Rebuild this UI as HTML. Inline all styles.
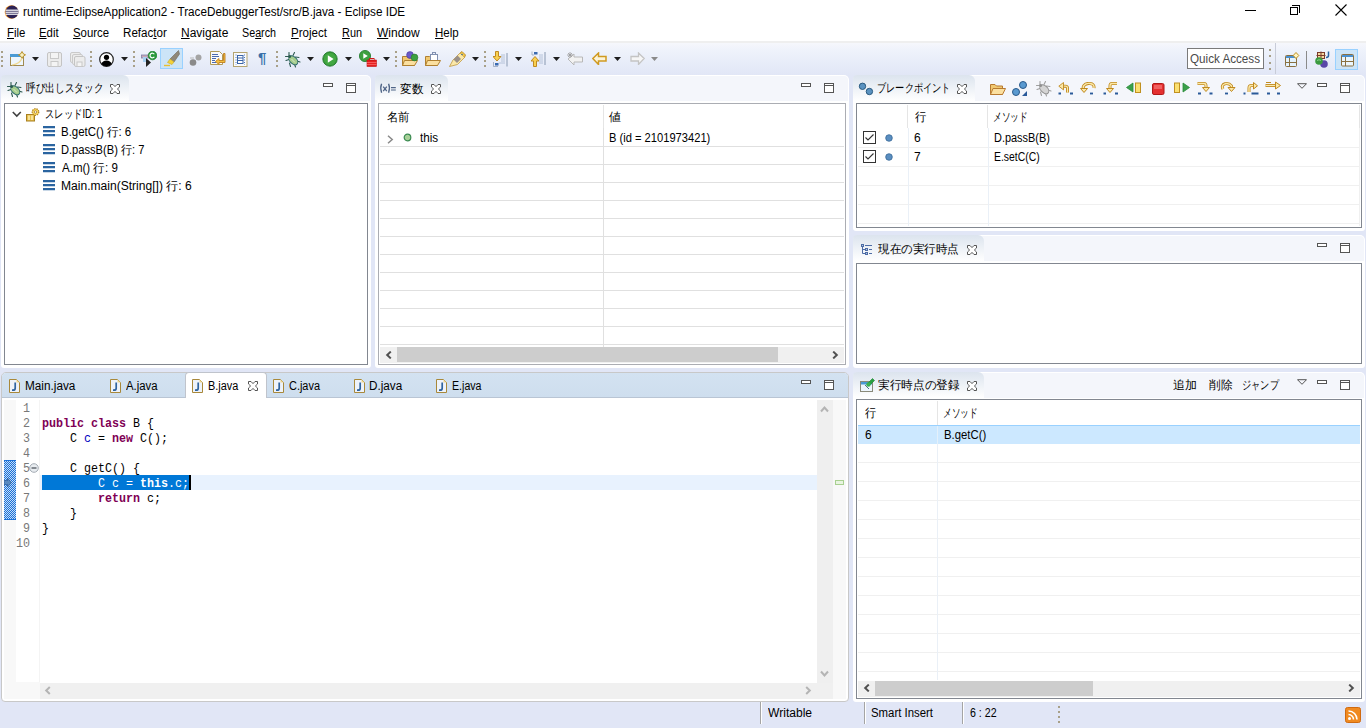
<!DOCTYPE html>
<html><head><meta charset="utf-8">
<style>
*{margin:0;padding:0;box-sizing:border-box}
html,body{width:1366px;height:728px;overflow:hidden;background:#e1e6f6;font-family:"Liberation Sans",sans-serif;font-size:12px;color:#000}
.a{position:absolute}
.t{position:absolute;white-space:nowrap;line-height:14px;font-size:12px}
.m{position:absolute;white-space:pre;font-family:"Liberation Mono",monospace;font-size:12px;line-height:15px;transform:scaleX(0.9722);transform-origin:0 0}
.panel{position:absolute;background:#fff;border-radius:5px 5px 3px 3px}
.hdr{position:absolute;left:1px;right:1px;top:1px;height:25px;background:#f4f6fb;border-radius:4px 4px 0 0}
.tab{position:absolute;left:0;top:0;height:26px;background:linear-gradient(#dce4ee,#fff);border-radius:4px 6px 0 0}
.cb{position:absolute;border:1px solid #828790;background:#fff}
.grid{position:absolute;height:1px;background:#f0f0f0}
.vline{position:absolute;width:1px;background:#f0f0f0}
.minb{position:absolute;width:10px;height:4px;border:1px solid #5a5a5a;background:#fff}
.maxb{position:absolute;width:11px;height:11px;border:1px solid #5a5a5a;border-top-width:2px;background:#fff}
.u{text-decoration:underline}
</style></head><body>

<!-- title bar -->
<div class="a" style="left:0;top:0;width:1366px;height:41px;background:#fff"></div>
<svg class="a" style="left:3px;top:4px" width="16" height="16" viewBox="0 0 16 16">
<circle cx="8.5" cy="8" r="6.8" fill="#f7941e"/>
<circle cx="9" cy="8" r="6.5" fill="#2c2255"/>
<rect x="2.5" y="5.6" width="13" height="1.2" fill="#fff"/>
<rect x="2.5" y="7.6" width="13" height="1.2" fill="#fff"/>
<rect x="2.5" y="9.6" width="13" height="1.2" fill="#fff"/>
</svg>
<!-- window controls -->
<div class="a" style="left:1245px;top:10px;width:11px;height:1px;background:#000"></div>
<div class="a" style="left:1290px;top:7px;width:8px;height:8px;border:1px solid #000"></div>
<div class="a" style="left:1292px;top:5px;width:8px;height:8px;border-top:1px solid #000;border-right:1px solid #000"></div>
<svg class="a" style="left:1335px;top:4px" width="12" height="12"><path d="M0.5 0.5L11.5 11.5M11.5 0.5L0.5 11.5" stroke="#000" stroke-width="1.1"/></svg>

<!-- menu -->

<!-- toolbar -->
<div class="a" style="left:0;top:41px;width:1366px;height:2px;background:#efefef"></div>
<div class="a" style="left:0;top:43px;width:1366px;height:32px;background:linear-gradient(#f6f7fc,#eef2fb 25%,#e1e6f6)"></div>

<svg width="0" height="0" style="position:absolute">
<defs>
<symbol id="dd" viewBox="0 0 7 4"><path d="M0 0H7L3.5 4Z" fill="#1e1e1e"/></symbol>
<symbol id="ddg" viewBox="0 0 7 4"><path d="M0 0H7L3.5 4Z" fill="#8a8a8a"/></symbol>
<symbol id="grip" viewBox="0 0 2 16"><rect x="0" y="0" width="2" height="2" fill="#a8a088"/><rect x="0" y="5" width="2" height="2" fill="#a8a088"/><rect x="0" y="9" width="2" height="2" fill="#a8a088"/><rect x="0" y="14" width="2" height="2" fill="#a8a088"/></symbol>
<symbol id="bug" viewBox="0 0 16 16"><g stroke="#2d5a50" stroke-width="1.1" fill="none" stroke-linecap="round"><path d="M4 0.5V3.5M9.5 0.5L8 3.5M0.5 4.5H3.5M10.5 5L14 5.5M1 8.5L4 7.5M12 9L15 10M4.5 11L5.5 14.5M9.5 12L10.5 15"/></g><ellipse cx="8.3" cy="8.3" rx="5.3" ry="3.4" transform="rotate(45 8.3 8.3)" fill="#a4cc8c" stroke="#2a6a6a" stroke-width="1"/><path d="M6.5 7L10 10.5" stroke="#d8eccc" stroke-width="0.9"/><circle cx="4.6" cy="4.6" r="1.5" fill="#2a5a50"/></symbol>
<symbol id="runc" viewBox="0 0 16 16"><circle cx="8" cy="8" r="7.2" fill="#3a9a3a" stroke="#1f7a2a" stroke-width="0.9"/><circle cx="8" cy="8" r="6" fill="#42a842"/><path d="M5.8 4.2L11.6 8L5.8 11.8Z" fill="#fff"/></symbol>
<symbol id="jfile" viewBox="0 0 11 14"><path d="M0.5 0.5H7.5L10.5 3.5V13.5H0.5Z" fill="#eef3fa" stroke="#a8883a" stroke-width="1"/><path d="M7.5 0.5V3.5H10.5Z" fill="#f0d890"/><path d="M6.2 3.5V9.2Q6.2 11.2 4 11.2H3" fill="none" stroke="#2f64a0" stroke-width="1.7"/></symbol>
<symbol id="xcl" viewBox="0 0 10 10"><path d="M0.5 0.5H3L5 2.6L7 0.5H9.5V3L7.4 5L9.5 7V9.5H7L5 7.4L3 9.5H0.5V7L2.6 5L0.5 3Z" fill="#fff" stroke="#555" stroke-width="1"/></symbol>
<symbol id="minb" viewBox="0 0 10 4"><rect x="0.5" y="0.5" width="9" height="3" fill="#fff" stroke="#555" stroke-width="1"/></symbol>
<symbol id="maxb" viewBox="0 0 10 10"><rect x="0.5" y="0.5" width="9" height="9" fill="#fff" stroke="#555" stroke-width="1"/><path d="M0.5 2.5H9.5" stroke="#555" stroke-width="1"/></symbol>
<symbol id="vmenu" viewBox="0 0 10 6"><path d="M0.5 0.7H9.5L5 5.3Z" fill="none" stroke="#555" stroke-width="1"/></symbol>
</defs></svg>
<svg class="a" style="left:1px;top:51px" width="2" height="16"><use href="#grip" width="2" height="16"/></svg>
<svg class="a" style="left:90px;top:51px" width="2" height="16"><use href="#grip" width="2" height="16"/></svg>
<svg class="a" style="left:133px;top:51px" width="2" height="16"><use href="#grip" width="2" height="16"/></svg>
<svg class="a" style="left:276px;top:51px" width="2" height="16"><use href="#grip" width="2" height="16"/></svg>
<svg class="a" style="left:395px;top:51px" width="2" height="16"><use href="#grip" width="2" height="16"/></svg>
<svg class="a" style="left:484px;top:51px" width="2" height="16"><use href="#grip" width="2" height="16"/></svg>
<svg class="a" style="left:1269px;top:49px" width="2" height="21"><rect x="0" y="0" width="2" height="2" fill="#a8a088"/><rect x="0" y="6" width="2" height="2" fill="#a8a088"/><rect x="0" y="13" width="2" height="2" fill="#a8a088"/><rect x="0" y="19" width="2" height="2" fill="#a8a088"/></svg>
<svg class="a" style="left:32px;top:57px" width="7" height="4"><use href="#dd" width="7" height="4"/></svg>
<svg class="a" style="left:121px;top:57px" width="7" height="4"><use href="#dd" width="7" height="4"/></svg>
<svg class="a" style="left:307px;top:57px" width="7" height="4"><use href="#dd" width="7" height="4"/></svg>
<svg class="a" style="left:345px;top:57px" width="7" height="4"><use href="#dd" width="7" height="4"/></svg>
<svg class="a" style="left:383px;top:57px" width="7" height="4"><use href="#dd" width="7" height="4"/></svg>
<svg class="a" style="left:472px;top:57px" width="7" height="4"><use href="#dd" width="7" height="4"/></svg>
<svg class="a" style="left:515px;top:57px" width="7" height="4"><use href="#dd" width="7" height="4"/></svg>
<svg class="a" style="left:553px;top:57px" width="7" height="4"><use href="#dd" width="7" height="4"/></svg>
<svg class="a" style="left:614px;top:57px" width="7" height="4"><use href="#dd" width="7" height="4"/></svg>
<svg class="a" style="left:651px;top:57px" width="7" height="4"><use href="#ddg" width="7" height="4"/></svg>
<!-- new -->
<svg class="a" style="left:9px;top:51px" width="17" height="16"><rect x="1.5" y="3.5" width="13" height="11" fill="#eef6fd" stroke="#a08a50"/><rect x="1" y="3" width="11" height="3" fill="#4a9ad4"/><path d="M13 0.5L14.5 3L16.5 3.8L14.5 5L13 7.5L11.5 5L9.5 3.8L11.5 3Z" fill="#f8f0c0" stroke="#b8902a" stroke-width="1"/><path d="M3 14Q11 13 13 7" stroke="#f0d890" fill="none" stroke-width="1.2"/></svg>
<!-- save (disabled) -->
<svg class="a" style="left:47px;top:52px" width="15" height="15"><rect x="0.5" y="0.5" width="14" height="14" rx="1.5" fill="#ececec" stroke="#c4c4c4"/><rect x="3.5" y="0.5" width="8" height="6" fill="#f4f4f4" stroke="#c8c8c8"/><rect x="4" y="9.5" width="7" height="5" fill="#f4f4f4" stroke="#c8c8c8"/></svg>
<!-- save all (disabled) -->
<svg class="a" style="left:70px;top:52px" width="16" height="15"><rect x="0.5" y="0.5" width="10" height="10" rx="1.5" fill="#ececec" stroke="#cacaca"/><rect x="2.5" y="2.5" width="10" height="10" rx="1.5" fill="#ececec" stroke="#cacaca"/><rect x="4.5" y="4.5" width="10.5" height="10" rx="1.5" fill="#ececec" stroke="#c4c4c4"/><rect x="7" y="10" width="5" height="4.5" fill="#f4f4f4" stroke="#c8c8c8"/></svg>
<!-- person -->
<svg class="a" style="left:99px;top:52px" width="15" height="15"><circle cx="7.5" cy="7.5" r="6.8" fill="#fff" stroke="#222" stroke-width="1.2"/><circle cx="7.5" cy="5.3" r="2.6" fill="#000"/><path d="M2.3 12Q3.5 8.5 7.5 8.5Q11.5 8.5 12.7 12Q10.5 14.3 7.5 14.3Q4.5 14.3 2.3 12Z" fill="#000"/></svg>
<!-- next/coverage -->
<svg class="a" style="left:141px;top:51px" width="16" height="16"><rect x="0.5" y="4" width="8" height="3" fill="#c8a8b8" stroke="#8080a8" stroke-width="0.8"/><rect x="2" y="6" width="4" height="5" fill="#a8d0f0"/><path d="M5 7L10 11.5L5 16Z" fill="#222"/><circle cx="11.5" cy="4.5" r="4.3" fill="#2a9a3a" stroke="#1a7a2a" stroke-width="0.7"/><path d="M13.3 3.3A2.3 2.3 0 1 0 13.3 5.7" stroke="#fff" stroke-width="1.2" fill="none"/></svg>
<!-- highlight toggle -->
<div class="a" style="left:160px;top:48px;width:23px;height:21px;background:#cce4f7;border:1px solid #99d1ff"></div>
<svg class="a" style="left:164px;top:50px" width="16" height="17"><path d="M14.5 0.5L15.5 4L10 12L6 9Z" fill="#8f8878" stroke="#6f6a5a" stroke-width="0.6"/><path d="M6 9L10 12L8 14.5L3.5 12.5Z" fill="#f4d23a" stroke="#c8a82a" stroke-width="0.6"/><path d="M0 15.5H6" stroke="#e8c030" stroke-width="1.4"/></svg>
<!-- gray balls -->
<svg class="a" style="left:189px;top:53px" width="13" height="13"><circle cx="4" cy="9.5" r="3.3" fill="#8a8a8a"/><circle cx="9.5" cy="4.5" r="3" fill="#a4a4a4"/><path d="M1 5H5" stroke="#b8b8b8"/></svg>
<!-- doc arrow -->
<svg class="a" style="left:210px;top:51px" width="16" height="15"><path d="M0.5 0.5H9.5L12.5 3.5V13.5H0.5Z" fill="#fafafa" stroke="#b09a5a"/><path d="M2 3.5H8M2 5.5H9M2 7.5H6M2 9.5H5M2 11.5H6" stroke="#4a6ab0" stroke-width="1"/><path d="M13.5 2.5V9.5H9V7.5L5.5 10.5L9 13.5V11.5H15V2.5Z" fill="#f4c040" stroke="#c08020" stroke-width="0.9"/></svg>
<!-- doc list -->
<svg class="a" style="left:233px;top:52px" width="15" height="15"><rect x="0.5" y="0.5" width="13.5" height="14" fill="#fbfbfb" stroke="#b4a470"/><path d="M3 2.5V13" stroke="#4a7ac0" stroke-dasharray="1 1.5"/><path d="M11.5 2.5V13" stroke="#4a7ac0" stroke-dasharray="1 1.5"/><rect x="4.5" y="3.5" width="5.5" height="8" fill="#fff" stroke="#3a64a8"/><path d="M4.5 6H10M4.5 8.5H10" stroke="#3a64a8"/></svg>
<!-- pilcrow -->
<div class="a" style="left:258px;top:49px;font-family:'Liberation Sans',sans-serif;font-weight:bold;font-size:15px;line-height:18px;color:#3a70aa">&para;</div>
<!-- debug -->
<svg class="a" style="left:285px;top:52px" width="16" height="16"><use href="#bug" width="16" height="16"/></svg>
<!-- run -->
<svg class="a" style="left:322px;top:51px" width="16" height="16"><use href="#runc" width="16" height="16"/></svg>
<!-- ext tools -->
<svg class="a" style="left:359px;top:50px" width="18" height="17"><circle cx="6" cy="6" r="5.6" fill="#3ea03e" stroke="#1f7a2a" stroke-width="0.8"/><path d="M4.3 3.2L8.8 6L4.3 8.8Z" fill="#fff"/><rect x="8" y="10" width="9.5" height="6.5" fill="#e62020" stroke="#c01010" stroke-width="0.6"/><rect x="10.5" y="8.5" width="4.5" height="2" fill="none" stroke="#d01818"/><path d="M8 12.5H17.5M8 14.5H17.5" stroke="#ff8080" stroke-width="0.6"/></svg>
<!-- open type -->
<svg class="a" style="left:402px;top:51px" width="17" height="16"><path d="M0.5 5.5H5L6.5 7H12.5V14.5H0.5Z" fill="#f0c870" stroke="#b08030"/><path d="M2.5 9.5H15.5L12.5 14.5H0.5Z" fill="#fbe0a0" stroke="#b08030"/><circle cx="8" cy="4" r="3.4" fill="#6a5ac8" stroke="#4a3a98" stroke-width="0.6"/><circle cx="12.5" cy="6.5" r="3.4" fill="#3aa040" stroke="#2a7030" stroke-width="0.6"/></svg>
<!-- open task -->
<svg class="a" style="left:425px;top:52px" width="16" height="14"><path d="M0.5 4.5H4.5L6 6H12.5V13.5H0.5Z" fill="#f0c870" stroke="#b08030"/><rect x="5.5" y="2.5" width="7" height="6" fill="#fff" stroke="#8090b0"/><rect x="7.5" y="0.5" width="3" height="2" fill="none" stroke="#8090b0"/><path d="M2.5 8.5H15.5L12.5 13.5H0.5Z" fill="#fbe0a0" stroke="#b08030"/></svg>
<!-- pen -->
<svg class="a" style="left:449px;top:51px" width="17" height="16"><path d="M0.5 15.5L4 9L11 2L15.5 6.5L8.5 13.5Z" fill="#fbe8a8" stroke="#c09840" stroke-width="0.8"/><path d="M4.5 8.5L8 12L12 8L8.5 4.5Z" fill="#9a9088"/><path d="M11 2L13 0.5L16.5 4L15.5 6.5" fill="#f4c848" stroke="#b08020" stroke-width="0.8"/><circle cx="13" cy="3.5" r="0.8" fill="#3a6aa0"/></svg>
<!-- next annotation -->
<svg class="a" style="left:493px;top:51px" width="15" height="16"><path d="M2.5 0.5H5.5V5.5H8L4 10L0 5.5H2.5Z" fill="#f8d050" stroke="#c08a20"/><path d="M8 4H12M8 6H12M8 8H12M8 10H12M6 12H12" stroke="#a8b8d0" stroke-width="0.8"/><rect x="2" y="12" width="3.5" height="2.5" fill="#3a6ab0"/><path d="M14 2V15.5" stroke="#8898b0"/><path d="M0.5 11V15.5H5" stroke="#8898b0" stroke-width="0.7" fill="none"/></svg>
<!-- prev annotation -->
<svg class="a" style="left:531px;top:51px" width="15" height="16"><path d="M4 5.5L8 10H5.5V15.5H2.5V10H0Z" fill="#f8d050" stroke="#c08a20" transform="translate(0 0)"/><path d="M8 4H12M8 6H12M8 8H12M8 10H12M8 12H12" stroke="#a8b8d0" stroke-width="0.8"/><rect x="3" y="1" width="3.5" height="2.5" fill="#3a6ab0"/><path d="M14 1V14" stroke="#8898b0"/><path d="M1 0.5V4H3" stroke="#8898b0" stroke-width="0.7" fill="none"/></svg>
<!-- last edit -->
<svg class="a" style="left:567px;top:52px" width="17" height="14"><path d="M1 7L7 2V5H15.5V10H7V13Z" fill="#f2f2f2" stroke="#b8b8b8"/><path d="M1 1L5 5M5 1L1 5M3 0V6M0 3H6" stroke="#9a9a9a" stroke-width="0.8"/></svg>
<!-- back -->
<svg class="a" style="left:592px;top:52px" width="15" height="13"><path d="M0.8 6.5L6.5 1V4.5H14V9H6.5V12.5Z" fill="#fcf4d8" stroke="#d09a20" stroke-width="1.5"/></svg>
<!-- forward disabled -->
<svg class="a" style="left:630px;top:52px" width="15" height="13"><path d="M14.2 6.5L8.5 1V4.5H1V9H8.5V12.5Z" fill="#f6f6f6" stroke="#c4c4c4" stroke-width="1.3"/></svg>
<!-- quick access -->
<div class="a" style="left:1187px;top:48px;width:77px;height:21px;background:#fff;border:1px solid #7a7a7a"></div>
<div class="a" style="left:1275px;top:43px;width:1px;height:31px;background:#c8ccd8"></div>
<svg class="a" style="left:1285px;top:52px" width="15" height="15"><rect x="0.5" y="3.5" width="11" height="11" rx="1" fill="#e4f2fc" stroke="#8a7040"/><rect x="1" y="4" width="10" height="2" fill="#4a90d0"/><path d="M4.5 6V14.5M1 10.5H11.5" stroke="#8a7040"/><path d="M11 0.5L13.8 3.5L11 6.5L8.2 3.5Z" fill="#fff4c0" stroke="#c09020"/></svg>
<div class="a" style="left:1306px;top:51px;width:1px;height:18px;background:#8a8a8a"></div>
<svg class="a" style="left:1315px;top:51px" width="16" height="18"><rect x="2.5" y="1.5" width="7" height="6" fill="#f4d8a0" stroke="#7a3a2a"/><path d="M6 0.5V8.5M1.5 4.5H10.5" stroke="#7a3a2a"/><path d="M13.5 0.5V4.5Q13.5 6.5 11 6.5" stroke="#2a64a0" stroke-width="1.5" fill="none"/><circle cx="9" cy="13" r="3.8" fill="#5a48a8"/><circle cx="4" cy="10" r="3.8" fill="#3a9a40"/><path d="M2 9.5Q4 8 6 9.5" stroke="#8ad08a" fill="none"/></svg>
<div class="a" style="left:1335px;top:49px;width:23px;height:21px;background:#cce4f7;border:1px solid #99d1ff"></div>
<svg class="a" style="left:1341px;top:54px" width="13" height="13"><rect x="0.5" y="0.5" width="12" height="11.5" rx="1" fill="#eaf6fd" stroke="#8a7040"/><rect x="1" y="1" width="11" height="2" fill="#4a90d0"/><path d="M4.5 3V12M1 7.5H12.5" stroke="#8a7040"/></svg>


<div class="t" style="left:23.0px;top:5px;transform:scaleX(0.9745);transform-origin:0 0;">runtime-EclipseApplication2 - TraceDebuggerTest/src/B.java - Eclipse IDE</div>
<div class="t" style="left:7.4px;top:26px;transform:scaleX(0.9526);transform-origin:0 0;"><span class="u">F</span>ile</div>
<div class="t" style="left:39.0px;top:26px;transform:scaleX(0.9476);transform-origin:0 0;"><span class="u">E</span>dit</div>
<div class="t" style="left:73.0px;top:26px;transform:scaleX(0.9474);transform-origin:0 0;"><span class="u">S</span>ource</div>
<div class="t" style="left:122.53px;top:26px;transform:scaleX(0.9667);transform-origin:0 0;">Refac<span class="u">t</span>or</div>
<div class="t" style="left:181.0px;top:26px;transform:scaleX(1.0000);transform-origin:0 0;"><span class="u">N</span>avigate</div>
<div class="t" style="left:242.0px;top:26px;transform:scaleX(0.8947);transform-origin:0 0;">Se<span class="u">a</span>rch</div>
<div class="t" style="left:291.0px;top:26px;transform:scaleX(0.9605);transform-origin:0 0;"><span class="u">P</span>roject</div>
<div class="t" style="left:342.0px;top:26px;transform:scaleX(0.9091);transform-origin:0 0;"><span class="u">R</span>un</div>
<div class="t" style="left:377.0px;top:26px;transform:scaleX(1.0000);transform-origin:0 0;"><span class="u">W</span>indow</div>
<div class="t" style="left:435.0px;top:26px;transform:scaleX(0.9600);transform-origin:0 0;"><span class="u">H</span>elp</div>
<div class="t" style="left:1190.2px;top:52px;transform:scaleX(0.9722);transform-origin:0 0;color:#4a4a4a">Quick Access</div>
<div class="panel" style="left:1px;top:75px;width:370px;height:293px"><div class="hdr"></div><div class="tab" style="width:128px"></div></div>
<svg class="a" style="left:7px;top:82px" width="16" height="16"><use href="#bug" width="16" height="16"/></svg>
<div class="t" style="left:26.1px;top:81px;transform:scaleX(0.8043);transform-origin:0 0;">呼び出しスタック</div>
<svg class="a" style="left:110px;top:84px" width="10" height="10"><use href="#xcl" width="10" height="10"/></svg>
<svg class="a" style="left:323px;top:83px" width="10" height="4"><use href="#minb" width="10" height="4"/></svg>
<svg class="a" style="left:346px;top:83px" width="10" height="10"><use href="#maxb" width="10" height="10"/></svg>
<div class="cb" style="left:4px;top:103px;width:364px;height:262px"></div>
<svg class="a" style="left:12px;top:111px" width="10" height="7"><path d="M0.8 1L4.8 5L8.8 1" fill="none" stroke="#404040" stroke-width="1.6"/></svg>
<svg class="a" style="left:25px;top:107px" width="16" height="15"><rect x="1.5" y="7.5" width="8" height="6.5" fill="#e8c050" stroke="#a88020"/><path d="M4 8.5V13M7 8.5V13" stroke="#fff6c0" stroke-width="1.3"/><circle cx="10.5" cy="5" r="3.3" fill="#f8d860" stroke="#b08020" stroke-width="1.2" stroke-dasharray="1.4 0.9"/><circle cx="10.5" cy="5" r="1.2" fill="#fff" stroke="#906010" stroke-width="0.6"/></svg>
<div class="t" style="left:45.42px;top:107px;transform:scaleX(0.7806);transform-origin:0 0;">スレッドID: 1</div>
<svg class="a" style="left:43px;top:126px" width="12" height="11"><path d="M0 1.2H12M0 5.2H12M0 9.2H12" stroke="#2a64a0" stroke-width="2.2"/></svg>
<div class="t" style="left:61.34px;top:125px;transform:scaleX(0.9569);transform-origin:0 0;">B.getC() 行: 6</div>
<svg class="a" style="left:43px;top:144px" width="12" height="11"><path d="M0 1.2H12M0 5.2H12M0 9.2H12" stroke="#2a64a0" stroke-width="2.2"/></svg>
<div class="t" style="left:61.37px;top:143px;transform:scaleX(0.9270);transform-origin:0 0;">D.passB(B) 行: 7</div>
<svg class="a" style="left:43px;top:162px" width="12" height="11"><path d="M0 1.2H12M0 5.2H12M0 9.2H12" stroke="#2a64a0" stroke-width="2.2"/></svg>
<div class="t" style="left:62.3px;top:161px;transform:scaleX(0.9621);transform-origin:0 0;">A.m() 行: 9</div>
<svg class="a" style="left:43px;top:180px" width="12" height="11"><path d="M0 1.2H12M0 5.2H12M0 9.2H12" stroke="#2a64a0" stroke-width="2.2"/></svg>
<div class="t" style="left:61.29px;top:179px;transform:scaleX(1.0054);transform-origin:0 0;">Main.main(String[]) 行: 6</div>
<div class="panel" style="left:375px;top:75px;width:474px;height:293px"><div class="hdr"></div><div class="tab" style="width:73px"></div></div>
<svg class="a" style="left:379px;top:83px" width="18" height="11"><g fill="none" stroke="#4f6486" stroke-width="1.3"><path d="M2.6 0.8Q0.9 5 2.6 9.7"/><path d="M9.6 0.8Q11.3 5 9.6 9.7"/><path d="M4.2 3.6L7.8 8.2M7.8 3.6L4.2 8.2"/><path d="M12 4.6H16.8M12 7H16.8" stroke-width="1.2"/></g></svg>
<div class="t" style="left:399.8px;top:82px;transform:scaleX(0.9708);transform-origin:0 0;">変数</div>
<svg class="a" style="left:431px;top:84px" width="10" height="10"><use href="#xcl" width="10" height="10"/></svg>
<svg class="a" style="left:801px;top:83px" width="10" height="4"><use href="#minb" width="10" height="4"/></svg>
<svg class="a" style="left:824px;top:83px" width="10" height="10"><use href="#maxb" width="10" height="10"/></svg>
<div class="cb" style="left:378px;top:103px;width:468px;height:262px;border-color:#abadb3"></div>
<div class="a" style="left:603px;top:105px;width:1px;height:23px;background:#e5e5e5"></div>
<div class="t" style="left:386.7px;top:110px;transform:scaleX(0.9500);transform-origin:0 0;">名前</div>
<div class="t" style="left:609px;top:110px;">値</div>
<div class="grid" style="left:380px;top:146px;width:464px;background:#e0e0e0"></div>
<div class="grid" style="left:380px;top:164px;width:464px;background:#e0e0e0"></div>
<div class="grid" style="left:380px;top:182px;width:464px;background:#e0e0e0"></div>
<div class="grid" style="left:380px;top:200px;width:464px;background:#e0e0e0"></div>
<div class="grid" style="left:380px;top:218px;width:464px;background:#e0e0e0"></div>
<div class="grid" style="left:380px;top:236px;width:464px;background:#e0e0e0"></div>
<div class="grid" style="left:380px;top:254px;width:464px;background:#e0e0e0"></div>
<div class="grid" style="left:380px;top:272px;width:464px;background:#e0e0e0"></div>
<div class="grid" style="left:380px;top:290px;width:464px;background:#e0e0e0"></div>
<div class="grid" style="left:380px;top:308px;width:464px;background:#e0e0e0"></div>
<div class="grid" style="left:380px;top:326px;width:464px;background:#e0e0e0"></div>
<div class="grid" style="left:380px;top:344px;width:464px;background:#e0e0e0"></div>
<div class="vline" style="left:603px;top:128px;height:219px;background:#e0e0e0"></div>
<svg class="a" style="left:387px;top:135px" width="7" height="9"><path d="M1 0.8L5.2 4.5L1 8.2" fill="none" stroke="#8a8a8a" stroke-width="1.5"/></svg>
<svg class="a" style="left:403px;top:133px" width="9" height="9"><circle cx="4.5" cy="4.5" r="3.3" fill="#a8d098" stroke="#3a8a50" stroke-width="1.2"/></svg>
<div class="t" style="left:420.3px;top:131px;transform:scaleX(0.9737);transform-origin:0 0;">this</div>
<div class="t" style="left:608.57px;top:131px;transform:scaleX(0.9287);transform-origin:0 0;">B (id = 2101973421)</div>
<div class="a" style="left:380px;top:347px;width:464px;height:16px;background:#f0f0f0"></div>
<div class="a" style="left:397px;top:347px;width:381px;height:15px;background:#cdcdcd"></div>
<svg class="a" style="left:385px;top:351px" width="7" height="8"><path d="M5.8 0.6L2.2 4L5.8 7.4" fill="none" stroke="#505050" stroke-width="2"/></svg>
<svg class="a" style="left:832px;top:351px" width="7" height="8"><path d="M1.2 0.6L4.8 4L1.2 7.4" fill="none" stroke="#505050" stroke-width="2"/></svg>
<div class="panel" style="left:853px;top:75px;width:512px;height:156px"><div class="hdr"></div><div class="tab" style="width:122px"></div></div>
<svg class="a" style="left:858px;top:82px" width="16" height="14"><circle cx="4.5" cy="4.3" r="3.2" fill="#5a92c0" stroke="#2a5a80"/><circle cx="11.4" cy="9.5" r="3.2" fill="#5a92c0" stroke="#2a5a80"/></svg>
<div class="t" style="left:876.93px;top:81px;transform:scaleX(0.7663);transform-origin:0 0;">ブレークポイント</div>
<svg class="a" style="left:957px;top:84px" width="10" height="10"><use href="#xcl" width="10" height="10"/></svg>
<svg class="a" style="left:990px;top:82px" width="16" height="13"><path d="M0.5 2.5H5L6.5 4H12.5V12.5H0.5Z" fill="#f0c870" stroke="#b87a30"/><path d="M3 6.5H15.5L12.5 12.5H0.5Z" fill="#fbe0a0" stroke="#b87a30"/></svg>
<svg class="a" style="left:1012px;top:81px" width="16" height="15"><circle cx="11" cy="4" r="3.5" fill="#5a9ad0" stroke="#2a5a8a"/><circle cx="4" cy="11" r="3.5" fill="#5a9ad0" stroke="#2a5a8a"/><path d="M15 10V15H10Z" fill="#2a5a9a"/></svg>
<svg class="a" style="left:1036px;top:81px" width="16" height="16"><g stroke="#a0a0a0" stroke-width="1.1" fill="none" stroke-linecap="round"><path d="M4 0.5V3.5M9.5 0.5L8 3.5M0.5 4.5H3.5M10.5 5L14 5.5M1 8.5L4 7.5M12 9L15 10M4.5 11L5.5 14.5M9.5 12L10.5 15"/></g><ellipse cx="8.3" cy="8.3" rx="5.3" ry="3.4" transform="rotate(45 8.3 8.3)" fill="#d4d4d4" stroke="#909090" stroke-width="1"/><circle cx="4.6" cy="4.6" r="1.5" fill="#909090"/></svg>
<svg class="a" style="left:1058px;top:82px" width="16" height="13"><path d="M5 4.2H7.5Q9.5 4.2 9.5 6.2V10.5" fill="none" stroke="#c08a20" stroke-width="3"/><path d="M5 4.2H7.5Q9.5 4.2 9.5 6.2V10.5" fill="none" stroke="#fbe8a8" stroke-width="1.2"/><path d="M0.8 4.2L5.5 0.5V7.9Z" fill="#fbe8a8" stroke="#c08a20" stroke-width="0.9"/><path d="M0.5 11.5H3M12 11.5H15" stroke="#2a5a9a" stroke-width="1.8"/></svg>
<svg class="a" style="left:1080px;top:82px" width="17" height="13"><path d="M5 9Q2 6 4 3.5Q6 1 10 1.5Q14.5 2 14 6" fill="none" stroke="#c08a20" stroke-width="3"/><path d="M5 9Q2 6 4 3.5Q6 1 10 1.5Q14.5 2 14 6" fill="none" stroke="#fbe8a8" stroke-width="1.4"/><path d="M0.5 6.5H7.5L4 10.5Z" fill="#fbe8a8" stroke="#c08a20"/><path d="M10 11.5H13" stroke="#2a5a9a" stroke-width="1.8"/></svg>
<svg class="a" style="left:1103px;top:82px" width="16" height="13"><path d="M14 1.5H9Q7 1.5 7 4V7" fill="none" stroke="#c08a20" stroke-width="3"/><path d="M14 1.5H9Q7 1.5 7 4V7" fill="none" stroke="#fbe8a8" stroke-width="1.4"/><path d="M3.5 6.5H10.5L7 10.5Z" fill="#fbe8a8" stroke="#c08a20"/><path d="M0.5 11.5H3M12 11.5H15" stroke="#2a5a9a" stroke-width="1.8"/></svg>
<svg class="a" style="left:1126px;top:82px" width="17" height="12"><path d="M0.5 5.5L7 1V10Z" fill="#3aa04a" stroke="#2a8a3a" stroke-width="0.8"/><rect x="9.5" y="1" width="5" height="9.5" fill="#fbe070" stroke="#c09020"/></svg>
<svg class="a" style="left:1152px;top:83px" width="13" height="12"><rect x="0.5" y="0.5" width="11.5" height="11" rx="1.5" fill="#e43030" stroke="#b01818"/><rect x="2" y="2" width="8" height="4" fill="#f06060"/></svg>
<svg class="a" style="left:1174px;top:82px" width="16" height="12"><rect x="0.5" y="1" width="5" height="9.5" fill="#fbe070" stroke="#c09020"/><path d="M15.5 5.5L9 1V10Z" fill="#3aa04a" stroke="#2a8a3a" stroke-width="0.8"/></svg>
<svg class="a" style="left:1197px;top:82px" width="16" height="13"><path d="M0.5 1.5H7Q9 1.5 9 4V6" fill="none" stroke="#c08a20" stroke-width="3"/><path d="M0.5 1.5H7Q9 1.5 9 4V6" fill="none" stroke="#fbe8a8" stroke-width="1.4"/><path d="M5.5 5.5H12.5L9 9.5Z" fill="#fbe8a8" stroke="#c08a20"/><path d="M1 11.5H4M12.5 11.5H15.5" stroke="#2a5a9a" stroke-width="1.8"/></svg>
<svg class="a" style="left:1220px;top:82px" width="16" height="13"><path d="M3 7Q1 3 5 1.8Q9 0.8 11.5 4V6" fill="none" stroke="#c08a20" stroke-width="3"/><path d="M3 7Q1 3 5 1.8Q9 0.8 11.5 4V6" fill="none" stroke="#fbe8a8" stroke-width="1.4"/><path d="M8 5.5H15L11.5 9.5Z" fill="#fbe8a8" stroke="#c08a20"/><path d="M5 11.5H8" stroke="#2a5a9a" stroke-width="1.8"/></svg>
<svg class="a" style="left:1243px;top:82px" width="16" height="13"><path d="M6 10V6Q6 3.5 8.5 3.5H11" fill="none" stroke="#c08a20" stroke-width="3"/><path d="M6 10V6Q6 3.5 8.5 3.5H11" fill="none" stroke="#fbe8a8" stroke-width="1.4"/><path d="M10.5 0.5V7L14.5 3.8Z" fill="#fbe8a8" stroke="#c08a20"/><path d="M0.5 11.5H2.5M8.5 11.5H15.5" stroke="#2a5a9a" stroke-width="1.8"/></svg>
<svg class="a" style="left:1265px;top:81px" width="17" height="14"><path d="M0.5 4.5H11" fill="none" stroke="#c08a20" stroke-width="3"/><path d="M0.5 4.5H11" fill="none" stroke="#fbe8a8" stroke-width="1.2"/><path d="M10.5 1V8L15.5 4.5Z" fill="#fbe8a8" stroke="#c08a20"/><path d="M1 1.5H6" stroke="#c08a20"/><path d="M2 12.5H5M12 12.5H15" stroke="#2a5a9a" stroke-width="1.8"/></svg>
<svg class="a" style="left:1297px;top:83px" width="10" height="6"><use href="#vmenu" width="10" height="6"/></svg>
<svg class="a" style="left:1317px;top:83px" width="10" height="4"><use href="#minb" width="10" height="4"/></svg>
<svg class="a" style="left:1340px;top:83px" width="10" height="10"><use href="#maxb" width="10" height="10"/></svg>
<div class="cb" style="left:856px;top:103px;width:506px;height:125px"></div>
<div class="a" style="left:907px;top:105px;width:1px;height:23px;background:#e5e5e5"></div>
<div class="a" style="left:987px;top:105px;width:1px;height:23px;background:#e5e5e5"></div>
<div class="t" style="left:914.7px;top:110px;transform:scaleX(0.9417);transform-origin:0 0;">行</div>
<div class="t" style="left:993.48px;top:110px;transform:scaleX(0.7239);transform-origin:0 0;">メソッド</div>
<div class="grid" style="left:858px;top:147px;width:502px"></div>
<div class="grid" style="left:858px;top:166px;width:502px"></div>
<div class="grid" style="left:858px;top:185px;width:502px"></div>
<div class="grid" style="left:858px;top:204px;width:502px"></div>
<div class="grid" style="left:858px;top:223px;width:502px"></div>
<div class="vline" style="left:908px;top:128px;height:98px;background:#eaf0f7"></div>
<div class="vline" style="left:988px;top:128px;height:98px;background:#eaf0f7"></div>
<div class="a" style="left:1359px;top:105px;width:1px;height:23px;background:#e5e5e5"></div>
<div class="vline" style="left:1359px;top:128px;height:98px;background:#f0f0f0"></div>
<svg class="a" style="left:863px;top:131px" width="13" height="13"><rect x="0.5" y="0.5" width="12" height="12" fill="#fff" stroke="#333"/><path d="M2.5 6.5L5 9L10.5 3.5" fill="none" stroke="#333" stroke-width="1.1"/></svg>
<svg class="a" style="left:885px;top:134px" width="8" height="8"><circle cx="4" cy="4" r="3.3" fill="#5a8ec0" stroke="#3a6a98" stroke-width="0.8"/></svg>
<div class="t" style="left:914px;top:131px;">6</div>
<div class="t" style="left:993.69px;top:131px;transform:scaleX(0.9100);transform-origin:0 0;">D.passB(B)</div>
<svg class="a" style="left:863px;top:150px" width="13" height="13"><rect x="0.5" y="0.5" width="12" height="12" fill="#fff" stroke="#333"/><path d="M2.5 6.5L5 9L10.5 3.5" fill="none" stroke="#333" stroke-width="1.1"/></svg>
<svg class="a" style="left:885px;top:153px" width="8" height="8"><circle cx="4" cy="4" r="3.3" fill="#5a8ec0" stroke="#3a6a98" stroke-width="0.8"/></svg>
<div class="t" style="left:914px;top:150px;">7</div>
<div class="t" style="left:993.73px;top:150px;transform:scaleX(0.8686);transform-origin:0 0;">E.setC(C)</div>
<div class="panel" style="left:853px;top:235px;width:512px;height:133px"><div class="hdr"></div><div class="tab" style="width:131px"></div></div>
<svg class="a" style="left:860px;top:243px" width="13" height="13"><g fill="#4d6ca6"><rect x="1" y="1" width="3" height="3"/><rect x="5" y="5" width="3" height="3"/><rect x="5" y="9" width="3" height="3"/></g><path d="M2.5 4V10.5H5M2.5 6.5H5M5 2.5H12M9 6.5H12M9 10.5H12" fill="none" stroke="#4d6ca6"/><g fill="#b8c8e0"><rect x="2" y="2" width="1" height="1"/><rect x="6" y="6" width="1" height="1"/><rect x="6" y="10" width="1" height="1"/></g></svg>
<div class="t" style="left:878.0px;top:242px;transform:scaleX(0.9619);transform-origin:0 0;">現在の実行時点</div>
<svg class="a" style="left:967px;top:245px" width="10" height="10"><use href="#xcl" width="10" height="10"/></svg>
<svg class="a" style="left:1317px;top:243px" width="10" height="4"><use href="#minb" width="10" height="4"/></svg>
<svg class="a" style="left:1340px;top:243px" width="10" height="10"><use href="#maxb" width="10" height="10"/></svg>
<div class="cb" style="left:856px;top:263px;width:506px;height:101px"></div>
<div class="panel" style="left:853px;top:372px;width:512px;height:330px"><div class="hdr"></div><div class="tab" style="width:131px"></div></div>
<svg class="a" style="left:860px;top:378px" width="15" height="14"><rect x="0.5" y="3.5" width="12" height="10" fill="#eef6fd" stroke="#8a8a7a"/><rect x="1" y="4" width="11" height="2.5" fill="#4a9ad4"/><path d="M5 7L9 11" stroke="#2a4a6a" stroke-width="0.8"/><path d="M8 5L12.5 0.5L14.5 2.5L10 7Z" fill="#2aa040" stroke="#1a8030" stroke-width="0.6"/><circle cx="8.5" cy="6.5" r="2.2" fill="#3ab050"/></svg>
<div class="t" style="left:877.9px;top:378px;transform:scaleX(0.9690);transform-origin:0 0;">実行時点の登録</div>
<svg class="a" style="left:967px;top:381px" width="10" height="10"><use href="#xcl" width="10" height="10"/></svg>
<div class="t" style="left:1173.3px;top:378px;transform:scaleX(0.9957);transform-origin:0 0;">追加</div>
<div class="t" style="left:1209.0px;top:378px;transform:scaleX(0.9739);transform-origin:0 0;">削除</div>
<div class="t" style="left:1242.27px;top:378px;transform:scaleX(0.7652);transform-origin:0 0;">ジャンプ</div>
<svg class="a" style="left:1297px;top:379px" width="10" height="6"><use href="#vmenu" width="10" height="6"/></svg>
<svg class="a" style="left:1317px;top:380px" width="10" height="4"><use href="#minb" width="10" height="4"/></svg>
<svg class="a" style="left:1340px;top:380px" width="10" height="10"><use href="#maxb" width="10" height="10"/></svg>
<div class="cb" style="left:856px;top:399px;width:506px;height:300px"></div>
<div class="a" style="left:937px;top:401px;width:1px;height:24px;background:#e5e5e5"></div>
<div class="t" style="left:864.7px;top:406px;transform:scaleX(0.9250);transform-origin:0 0;">行</div>
<div class="t" style="left:943.48px;top:406px;transform:scaleX(0.7239);transform-origin:0 0;">メソッド</div>
<div class="grid" style="left:858px;top:462px;width:502px"></div>
<div class="grid" style="left:858px;top:481px;width:502px"></div>
<div class="grid" style="left:858px;top:500px;width:502px"></div>
<div class="grid" style="left:858px;top:519px;width:502px"></div>
<div class="grid" style="left:858px;top:538px;width:502px"></div>
<div class="grid" style="left:858px;top:557px;width:502px"></div>
<div class="grid" style="left:858px;top:576px;width:502px"></div>
<div class="grid" style="left:858px;top:595px;width:502px"></div>
<div class="grid" style="left:858px;top:614px;width:502px"></div>
<div class="grid" style="left:858px;top:633px;width:502px"></div>
<div class="grid" style="left:858px;top:652px;width:502px"></div>
<div class="grid" style="left:858px;top:671px;width:502px"></div>
<div class="vline" style="left:937px;top:443px;height:237px;background:#eaf0f7"></div>
<div class="a" style="left:858px;top:425px;width:502px;height:19px;background:#cce8ff;border-top:1px solid #99d1ff"></div>
<div class="vline" style="left:937px;top:426px;height:18px;background:#e4f0fa"></div>
<div class="t" style="left:865px;top:428px;">6</div>
<div class="t" style="left:943.56px;top:428px;transform:scaleX(0.9442);transform-origin:0 0;">B.getC()</div>
<div class="a" style="left:858px;top:681px;width:502px;height:16px;background:#f0f0f0"></div>
<div class="a" style="left:875px;top:681px;width:218px;height:15px;background:#cdcdcd"></div>
<svg class="a" style="left:863px;top:684px" width="7" height="8"><path d="M5.8 0.6L2.2 4L5.8 7.4" fill="none" stroke="#505050" stroke-width="2"/></svg>
<svg class="a" style="left:1348px;top:684px" width="7" height="8"><path d="M1.2 0.6L4.8 4L1.2 7.4" fill="none" stroke="#505050" stroke-width="2"/></svg>
<div class="a" style="left:1px;top:372px;width:848px;height:330px;background:#fff;border:1px solid #c8c8c8;border-radius:5px 5px 4px 4px"></div>
<div class="a" style="left:2px;top:373px;width:846px;height:25px;background:linear-gradient(#d3e2f1,#cedeee);border-bottom:1px solid #b9c5d4;border-radius:4px 4px 0 0"></div>
<div class="a" style="left:185px;top:372px;width:82px;height:26px;background:#fff;border:1px solid #c0c4cc;border-bottom:none;border-radius:4px 4px 0 0"></div>
<svg class="a" style="left:9px;top:379px" width="11" height="14"><use href="#jfile" width="11" height="14"/></svg>
<div class="t" style="left:25.02px;top:379px;transform:scaleX(0.9804);transform-origin:0 0;">Main.java</div>
<svg class="a" style="left:110px;top:379px" width="11" height="14"><use href="#jfile" width="11" height="14"/></svg>
<div class="t" style="left:126.3px;top:379px;transform:scaleX(0.9471);transform-origin:0 0;">A.java</div>
<svg class="a" style="left:192px;top:379px" width="11" height="14"><use href="#jfile" width="11" height="14"/></svg>
<div class="t" style="left:208.09px;top:379px;transform:scaleX(0.9091);transform-origin:0 0;">B.java</div>
<svg class="a" style="left:273px;top:379px" width="11" height="14"><use href="#jfile" width="11" height="14"/></svg>
<div class="t" style="left:289.0px;top:379px;transform:scaleX(0.9118);transform-origin:0 0;">C.java</div>
<svg class="a" style="left:354px;top:379px" width="11" height="14"><use href="#jfile" width="11" height="14"/></svg>
<div class="t" style="left:369.42px;top:379px;transform:scaleX(0.9758);transform-origin:0 0;">D.java</div>
<svg class="a" style="left:436px;top:379px" width="11" height="14"><use href="#jfile" width="11" height="14"/></svg>
<div class="t" style="left:451.92px;top:379px;transform:scaleX(0.8848);transform-origin:0 0;">E.java</div>
<svg class="a" style="left:248px;top:381px" width="10" height="10"><use href="#xcl" width="10" height="10"/></svg>
<svg class="a" style="left:801px;top:380px" width="10" height="4"><use href="#minb" width="10" height="4"/></svg>
<svg class="a" style="left:824px;top:380px" width="10" height="10"><use href="#maxb" width="10" height="10"/></svg>
<div class="a" style="left:4px;top:400px;width:12px;height:282px;background:#f8f8f8"></div>
<div class="a" style="left:39px;top:400px;width:1px;height:282px;background:#f4f4f4"></div>
<svg class="a" style="left:4px;top:460px" width="12" height="60"><defs><pattern id="chk" width="2" height="2" patternUnits="userSpaceOnUse"><rect width="2" height="2" fill="#1a70d8"/><rect x="0" y="0" width="1" height="1" fill="#c4dcf6"/><rect x="1" y="1" width="1" height="1" fill="#c4dcf6"/></pattern></defs><rect width="12" height="60" fill="url(#chk)"/><rect width="12" height="1" fill="#1a70d8"/><rect y="59" width="12" height="1" fill="#1a70d8"/></svg>
<svg class="a" style="left:4px;top:478px" width="8" height="9"><path d="M0 2.5H3.5V0L7.5 4.5L3.5 9V6.5H0Z" fill="#5a8ac0" stroke="#2a5a98" stroke-width="0.7"/></svg>
<div class="a" style="left:40px;top:475px;width:777px;height:15px;background:#e8f2fe"></div>
<div class="a" style="left:42px;top:475px;width:147px;height:15px;background:#0078d7"></div>
<div class="a" style="left:189px;top:475px;width:2px;height:15px;background:#000"></div>
<div class="m" style="left:23px;top:402px;color:#787878">1</div>
<div class="m" style="left:23px;top:417px;color:#787878">2</div>
<div class="m" style="left:23px;top:432px;color:#787878">3</div>
<div class="m" style="left:23px;top:447px;color:#787878">4</div>
<div class="m" style="left:23px;top:462px;color:#787878">5</div>
<div class="m" style="left:23px;top:477px;color:#787878">6</div>
<div class="m" style="left:23px;top:492px;color:#787878">7</div>
<div class="m" style="left:23px;top:507px;color:#787878">8</div>
<div class="m" style="left:23px;top:522px;color:#787878">9</div>
<div class="m" style="left:16px;top:537px;color:#787878">10</div>
<svg class="a" style="left:29px;top:463px" width="10" height="10"><circle cx="5" cy="5" r="4.3" fill="#e8ecf0" stroke="#a4acb4"/><path d="M2.5 5H7.5" stroke="#404850" stroke-width="1.2"/></svg>
<div class="m" style="left:42px;top:417px"><span style="color:#7f0055;font-weight:bold">public</span> <span style="color:#7f0055;font-weight:bold">class</span> B {</div>
<div class="m" style="left:42px;top:432px">    C <span style="color:#0000c0">c</span> = <span style="color:#7f0055;font-weight:bold">new</span> C();</div>
<div class="m" style="left:42px;top:462px">    C getC() {</div>
<div class="m" style="left:42px;top:477px"><span style="color:#fff">        C c = <b>this</b>.c;</span></div>
<div class="m" style="left:42px;top:492px">        <span style="color:#7f0055;font-weight:bold">return</span> c;</div>
<div class="m" style="left:42px;top:507px">    }</div>
<div class="m" style="left:42px;top:522px">}</div>
<div class="a" style="left:817px;top:400px;width:16px;height:299px;background:#efefef"></div>
<div class="a" style="left:833px;top:400px;width:13px;height:299px;background:#f8f8f8"></div>
<svg class="a" style="left:820px;top:405px" width="9" height="8"><path d="M1 6.5L4.5 2.5L8 6.5" fill="none" stroke="#b4b4b4" stroke-width="2"/></svg>
<svg class="a" style="left:820px;top:670px" width="9" height="8"><path d="M1 1.5L4.5 5.5L8 1.5" fill="none" stroke="#b4b4b4" stroke-width="2"/></svg>
<div class="a" style="left:835px;top:480px;width:9px;height:5px;border:1px solid #a8d090;background:#e8f4e0"></div>
<div class="a" style="left:40px;top:683px;width:793px;height:16px;background:#f0f0f0"></div>
<div class="a" style="left:4px;top:682px;width:36px;height:17px;background:#f8f8f8"></div>
<svg class="a" style="left:44px;top:686px" width="7" height="9"><path d="M5.8 1L2.2 4.5L5.8 8" fill="none" stroke="#b4b4b4" stroke-width="2"/></svg>
<svg class="a" style="left:805px;top:686px" width="7" height="9"><path d="M1.2 1L4.8 4.5L1.2 8" fill="none" stroke="#b4b4b4" stroke-width="2"/></svg>
<div class="a" style="left:760px;top:702px;width:1px;height:22px;background:#a4a4a4"></div><div class="a" style="left:761px;top:702px;width:1px;height:22px;background:#fff"></div>
<div class="a" style="left:864px;top:702px;width:1px;height:22px;background:#a4a4a4"></div><div class="a" style="left:865px;top:702px;width:1px;height:22px;background:#fff"></div>
<div class="a" style="left:962px;top:702px;width:1px;height:22px;background:#a4a4a4"></div><div class="a" style="left:963px;top:702px;width:1px;height:22px;background:#fff"></div>
<div class="t" style="left:767.9px;top:706px;transform:scaleX(1.0068);transform-origin:0 0;">Writable</div>
<div class="t" style="left:870.95px;top:706px;transform:scaleX(0.9492);transform-origin:0 0;">Smart Insert</div>
<div class="t" style="left:970.2px;top:706px;transform:scaleX(0.8867);transform-origin:0 0;">6 : 22</div>
<svg class="a" style="left:1058px;top:706px" width="2" height="17"><rect x="0" y="0" width="2" height="2" fill="#a8a088"/><rect x="0" y="5" width="2" height="2" fill="#a8a088"/><rect x="0" y="10" width="2" height="2" fill="#a8a088"/><rect x="0" y="15" width="2" height="2" fill="#a8a088"/></svg>
<svg class="a" style="left:1345px;top:707px" width="16" height="16"><rect x="0.5" y="0.5" width="15" height="15" rx="2" fill="#f08a20" stroke="#d06a10"/><circle cx="4.5" cy="11.5" r="1.5" fill="#fff"/><path d="M3.5 7.5A5 5 0 0 1 8.5 12.5M3.5 4A8.5 8.5 0 0 1 12 12.5" fill="none" stroke="#fff" stroke-width="1.6"/></svg>
</body></html>
